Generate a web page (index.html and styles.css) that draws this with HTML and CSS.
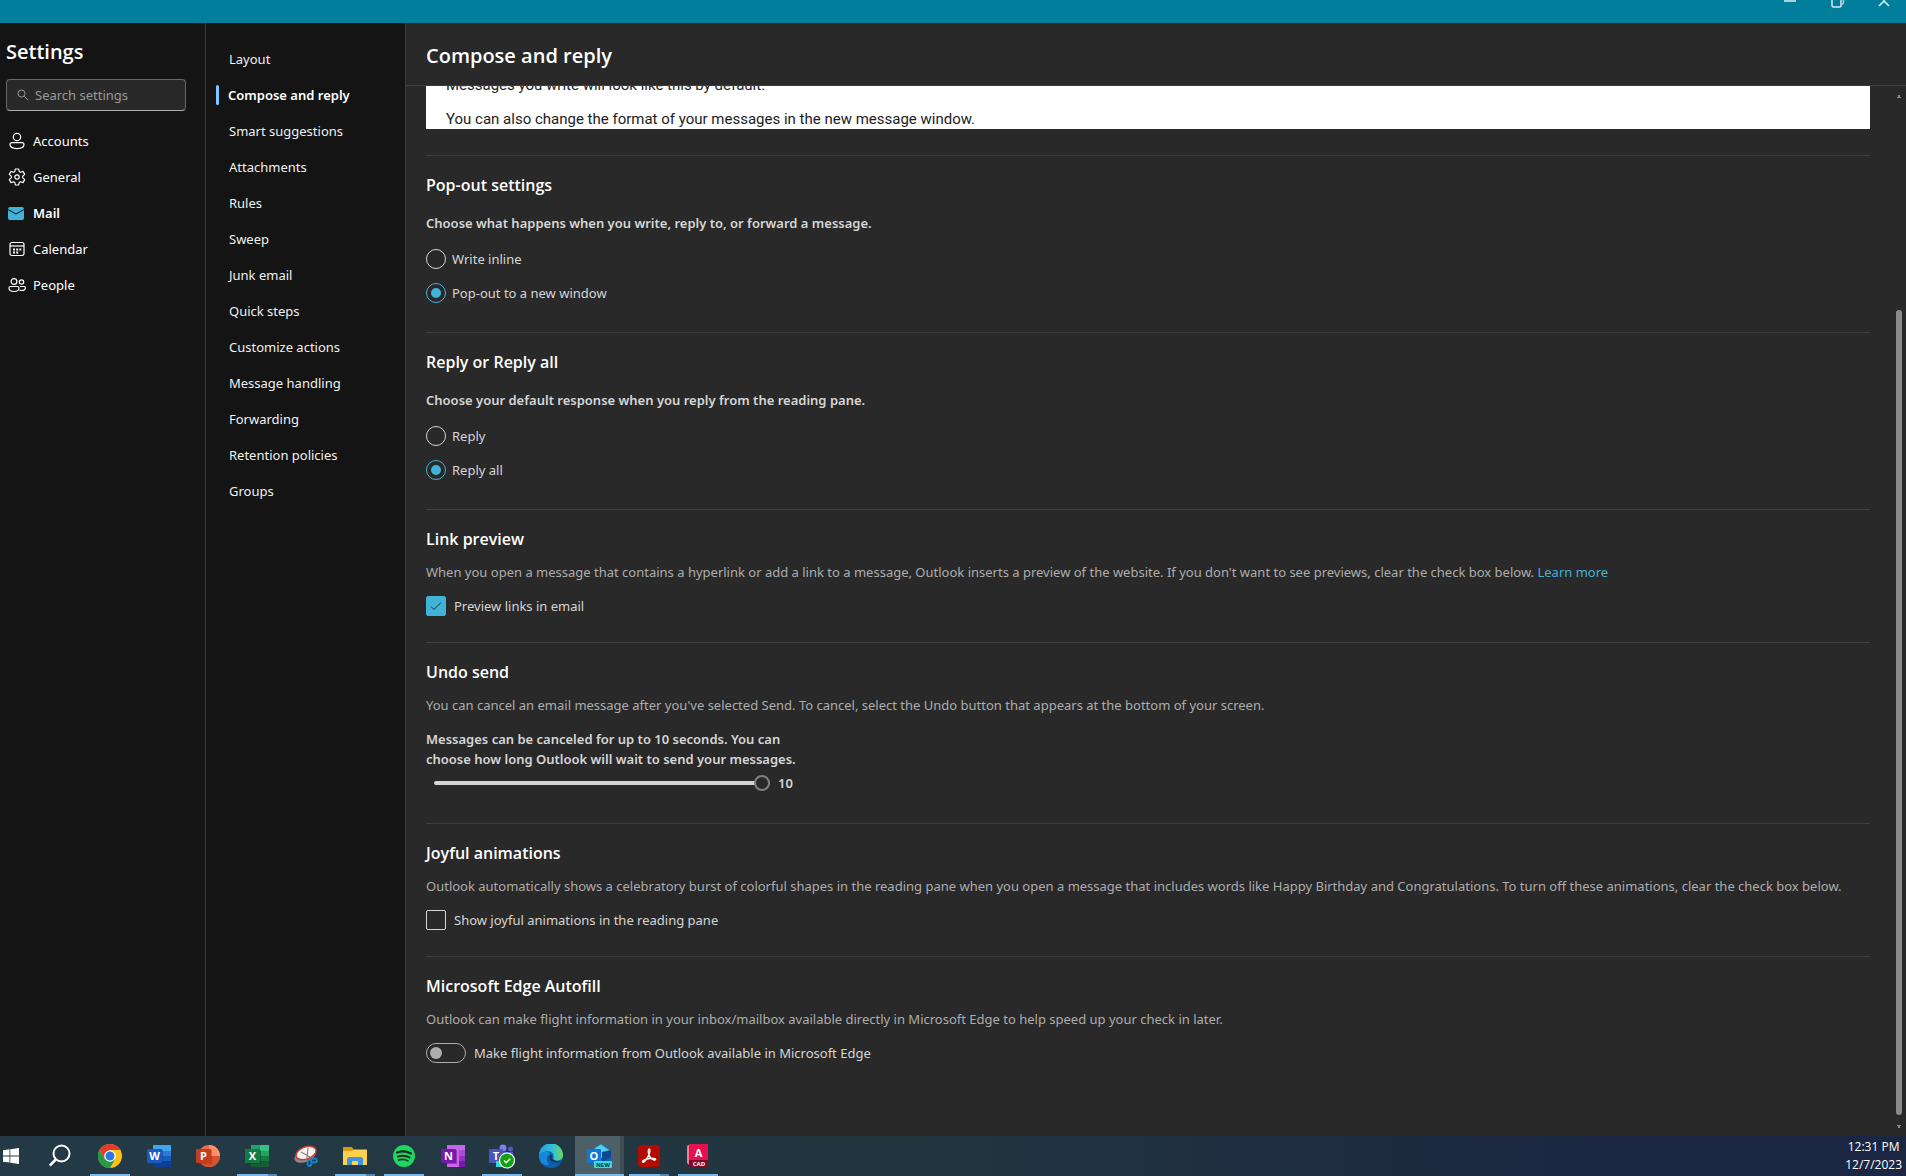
FILE: index.html
```html
<!DOCTYPE html>
<html lang="en">
<head>
<meta charset="utf-8">
<title>Settings - Outlook</title>
<link rel="stylesheet" href="styles.css">
</head>
<body>
<div class="window-bar">
  <button class="win-btn" aria-label="Minimize"><svg width="14" height="8" viewBox="0 0 14 8"><path d="M1 1h12" stroke="#a9d2dd" stroke-width="2"/></svg></button>
  <button class="win-btn" aria-label="Restore"><svg width="14" height="8" viewBox="0 0 14 8" fill="none"><path d="M1 0v5.500q0 1.500 1.500 1.500h6q1.500 0 1.500-1.500V0" stroke="#d4e9ef" stroke-width="1.500"/><path d="M12.500 0v2q0 2-1.500 2.500" stroke="#a9d2dd" stroke-width="1.500"/></svg></button>
  <button class="win-btn" aria-label="Close"><svg width="14" height="8" viewBox="0 0 14 8"><path d="M7 0v1M2 6l5-5 5 5" stroke="#e6f3f6" stroke-width="1.500" fill="none"/></svg></button>
</div>

<div class="settings">
  <aside class="sidebar">
    <h1 class="title">Settings</h1>
    <label class="search">
      <svg width="12" height="12" viewBox="0 0 12 12" fill="none" stroke="#999"><circle cx="4.500" cy="4.500" r="3.500"/><path d="M7.200 7.200l4 4"/></svg>
      <input type="text" placeholder="Search settings" aria-label="Search settings">
    </label>
    <nav class="categories">
      <a href="#accounts"><svg width="18" height="18" viewBox="0 0 18 18" fill="none" stroke="#fff" stroke-width="1.200"><circle cx="9" cy="5" r="3.700"/><path d="M4 10.600h10a2 2 0 0 1 2 2c0 2.500-3 4-7 4s-7-1.500-7-4a2 2 0 0 1 2-2z"/></svg>Accounts</a>
      <a href="#general"><svg width="18" height="18" viewBox="0 0 18 18" fill="none" stroke="#fff" stroke-width="1.200" stroke-linejoin="round"><circle cx="9" cy="9" r="2.200"/><path d="M7.300 1h3.400l.5 2.500 1.300.8 2.500-.9 1.700 3-2 1.700v1.800l2 1.700-1.700 3-2.500-.9-1.300.8-.5 2.500H7.300l-.5-2.500-1.300-.8-2.500.9-1.700-3 2-1.700V8.100l-2-1.700 1.700-3 2.500.9 1.300-.8z"/></svg>General</a>
      <a href="#mail" class="current"><svg width="18" height="18" viewBox="0 0 18 18"><rect y="3" width="16" height="13" rx="2" fill="#41b3d8"/><path d="M0 5.500l8 4.500 8-4.500" fill="none" stroke="#14313c" stroke-width="1.100"/></svg>Mail</a>
      <a href="#calendar"><svg width="18" height="18" viewBox="0 0 18 18" fill="none" stroke="#fff" stroke-width="1.200"><rect x="2" y="2.500" width="14" height="13" rx="2"/><path d="M2 6h14"/><path d="M5 9.500h2M8.200 9.500h2M11.300 9.500h2M5 12.500h2M8.200 12.500h2" stroke-width="1.800"/></svg>Calendar</a>
      <a href="#people"><svg width="18" height="18" viewBox="0 0 18 18" fill="none" stroke="#fff" stroke-width="1.200"><circle cx="6" cy="5.500" r="2.900"/><circle cx="13.500" cy="6" r="2.200"/><path d="M2.500 10.500h7q1.500 0 1.500 1.500 0 3.500-5 3.500T1 12q0-1.500 1.500-1.500zM12 10.500h4q1.300 0 1.300 1.200 0 2.800-3.500 2.800-1.500 0-2.300-.4"/></svg>People</a>
    </nav>
  </aside>

  <nav class="pages">
    <a href="#layout">Layout</a>
    <a href="#compose" class="current">Compose and reply</a>
    <a href="#smart">Smart suggestions</a>
    <a href="#attachments">Attachments</a>
    <a href="#rules">Rules</a>
    <a href="#sweep">Sweep</a>
    <a href="#junk">Junk email</a>
    <a href="#quick">Quick steps</a>
    <a href="#customize">Customize actions</a>
    <a href="#handling">Message handling</a>
    <a href="#forwarding">Forwarding</a>
    <a href="#retention">Retention policies</a>
    <a href="#groups">Groups</a>
  </nav>

  <main class="detail">
    <header class="detail-head"><h2>Compose and reply</h2></header>
    <div class="scroll-area">
      <div class="content">
        <div class="preview">
          <p>Messages you write will look like this by default.</p>
          <p>You can also change the format of your messages in the new message window.</p>
        </div>

        <section class="group choices">
          <h3>Pop-out settings</h3>
          <p class="question" id="popout">Choose what happens when you write, reply to, or forward a message.</p>
          <div class="options" role="radiogroup" aria-labelledby="popout">
            <label class="option"><input type="radio" name="popout">Write inline</label>
            <label class="option"><input type="radio" name="popout" checked>Pop-out to a new window</label>
          </div>
        </section>

        <section class="group choices">
          <h3>Reply or Reply all</h3>
          <p class="question" id="reply">Choose your default response when you reply from the reading pane.</p>
          <div class="options" role="radiogroup" aria-labelledby="reply">
            <label class="option"><input type="radio" name="reply">Reply</label>
            <label class="option"><input type="radio" name="reply" checked>Reply all</label>
          </div>
        </section>

        <section class="group">
          <h3>Link preview</h3>
          <p class="description">When you open a message that contains a hyperlink or add a link to a message, Outlook inserts a preview of the website. If you don't want to see previews, clear the check box below. <a href="#learn">Learn more</a></p>
          <label class="option tick"><span class="box"><input type="checkbox" checked><svg width="12" height="12" viewBox="0 0 12 12"><path d="M1 6.500l3 3L11 2.500" fill="none" stroke="#14313c"/></svg></span>Preview links in email</label>
        </section>

        <section class="group choices">
          <h3>Undo send</h3>
          <p class="description">You can cancel an email message after you've selected Send. To cancel, select the Undo button that appears at the bottom of your screen.</p>
          <label class="delay-label" for="delay">Messages can be canceled for up to 10 seconds. You can<br>choose how long Outlook will wait to send your messages.</label>
          <div class="delay"><input id="delay" type="range" min="0" max="10" value="10"><output for="delay">10</output></div>
        </section>

        <section class="group">
          <h3>Joyful animations</h3>
          <p class="description">Outlook automatically shows a celebratory burst of colorful shapes in the reading pane when you open a message that includes words like Happy Birthday and Congratulations. To turn off these animations, clear the check box below.</p>
          <label class="option tick"><span class="box"><input type="checkbox"></span>Show joyful animations in the reading pane</label>
        </section>

        <section class="group">
          <h3>Microsoft Edge Autofill</h3>
          <p class="description">Outlook can make flight information in your inbox/mailbox available directly in Microsoft Edge to help speed up your check in later.</p>
          <label class="option tick"><input type="checkbox" role="switch" class="switch">Make flight information from Outlook available in Microsoft Edge</label>
        </section>
      </div>
      <div class="scrollbar" aria-hidden="true">
        <svg width="4" height="4" viewBox="0 0 4 4"><path d="M0 3h4v1H0zM1 1h2v2H1z" fill="#8a8a8a"/></svg>
        <div class="thumb"></div>
        <svg width="4" height="4" viewBox="0 0 4 4"><path d="M0 0h4v1H0zM1 1h2v2H1z" fill="#8a8a8a"/></svg>
      </div>
    </div>
  </main>
</div>

<footer class="taskbar">
  <div class="apps">
    <button class="start" aria-label="Start"><svg width="16" height="16" viewBox="0 0 16 16" fill="#fff"><path d="M0 2.200l6.500-.9v6.200H0zM7.300 1.200L16 0v7.500H7.300zM0 8.400h6.500v6.200L0 13.700zM7.300 8.400H16V16l-8.700-1.200z"/></svg></button>
    <button aria-label="Search"><svg width="24" height="24" viewBox="0 0 24 24" fill="none" stroke="#fff" stroke-width="2"><circle cx="12.500" cy="9.500" r="8"/><path d="M6.800 15.500L.8 21.500" stroke-width="2.500"/></svg></button>
    <button class="open" aria-label="Chrome"><svg width="24" height="24" viewBox="0 0 24 24"><circle cx="12" cy="12" r="12" fill="#fbc116"/><path d="M1.600 6A12 12 0 0 1 22.400 6H12L6.800 15z" fill="#e33b2e"/><path d="M1.600 6A12 12 0 0 0 12 24l5.200-9L12 17.500 6.800 15z" fill="#279847"/><circle cx="12" cy="12" r="5.800" fill="#fff"/><circle cx="12" cy="12" r="4.500" fill="#2a77e4"/></svg></button>
    <button aria-label="Word"><svg width="24" height="24" viewBox="0 0 24 24"><path d="M6 1h18v6H6z" fill="#41a5ee"/><path d="M6 7h18v5H6z" fill="#2b7cd3"/><path d="M6 12h18v5H6z" fill="#185abd"/><path d="M6 17h18v6H6z" fill="#103f91"/><rect x="3" y="6" width="13" height="14" fill="#103f91" opacity=".5"/><rect y="5" width="15" height="14" rx="1" fill="#185abd"/><text x="7.500" y="16" class="glyph">W</text></svg></button>
    <button aria-label="PowerPoint"><svg width="24" height="24" viewBox="0 0 24 24"><circle cx="13" cy="12" r="11" fill="#ed6c47"/><path d="M13 1a11 11 0 0 1 11 11H13z" fill="#ff8f6b"/><path d="M2 12h22a11 11 0 0 1-22 0z" fill="#d35230"/><rect x="3" y="6" width="13" height="14" fill="#8b2a14" opacity=".4"/><rect y="5" width="15" height="14" rx="1" fill="#c43e1c"/><text x="7.500" y="16" class="glyph">P</text></svg></button>
    <button class="open stacked" aria-label="Excel"><svg width="24" height="24" viewBox="0 0 24 24"><path d="M6 1h18v22H6z" fill="#21a366"/><path d="M15 1h9v6h-9z" fill="#33c481"/><path d="M15 12h9v5h-9z" fill="#107c41"/><path d="M6 12h9v11H6z" fill="#185c37"/><path d="M6 17h18v6H6z" fill="#185c37"/><rect x="3" y="6" width="13" height="14" fill="#0c3b21" opacity=".5"/><rect y="5" width="15" height="14" rx="1" fill="#107c41"/><text x="7.500" y="16" class="glyph">X</text></svg></button>
    <button aria-label="Snipping Tool"><svg width="24" height="24" viewBox="0 0 24 24"><ellipse cx="11" cy="12" rx="11" ry="6" transform="rotate(-20 11 12)" fill="#8b8b8b"/><ellipse cx="12" cy="9" rx="10.500" ry="6" transform="rotate(-20 12 9)" fill="#f4f4f4" stroke="#d8382d" stroke-width="1.500"/><path d="M7 8l9 5M14 4l-1 10" stroke="#888" stroke-width="1.200"/><g fill="none" stroke="#1782cc" stroke-width="1.800"><ellipse cx="15.500" cy="19" rx="2" ry="3"/><ellipse cx="20" cy="16.500" rx="3" ry="2"/></g></svg></button>
    <button class="open stacked" aria-label="File Explorer"><svg width="24" height="24" viewBox="0 0 24 24"><path d="M0 5V4q0-1 1-1h8l2 3h12q1 0 1 1v4H0z" fill="#d99b0a"/><path d="M0 7h9l2-1.500h13V21H0z" fill="#ffcf4f"/><path d="M4 21v-6q0-2 2-2h12q2 0 2 2v6h-5v-4H9v4z" fill="#3f95dd"/></svg></button>
    <button class="open" aria-label="Spotify"><svg width="24" height="24" viewBox="0 0 24 24"><circle cx="12" cy="12" r="11" fill="#1ed760"/><g fill="none" stroke="#172b22" stroke-linecap="round"><path d="M5 8.500q7.500-2.500 14 1" stroke-width="2.300"/><path d="M6 12.500q6.500-2 11.500 1" stroke-width="1.900"/><path d="M6.500 16q5.500-1.500 9.500.9" stroke-width="1.600"/></g></svg></button>
    <button aria-label="OneNote"><svg width="24" height="24" viewBox="0 0 24 24"><path d="M6 1h18v22H6z" fill="#ca64ea"/><path d="M18 6h6v6h-6z" fill="#ae4bd5"/><path d="M18 12h6v5h-6z" fill="#9332bf"/><path d="M18 17h6v6h-6z" fill="#7719aa"/><rect x="3" y="6" width="13" height="14" fill="#50127a" opacity=".5"/><rect y="5" width="15" height="14" rx="1" fill="#7719aa"/><text x="7.500" y="16" class="glyph">N</text></svg></button>
    <button class="open" aria-label="Teams"><svg width="26" height="26" viewBox="0 0 26 26"><circle cx="14" cy="5" r="3.500" fill="#7b83eb"/><circle cx="21.500" cy="6" r="2.500" fill="#5059c9"/><path d="M8 9h16v6q0 6-7 7-7 0-9-6z" fill="#5059c9"/><rect y="6" width="14" height="14" rx="1" fill="#4b53bc"/><text x="7" y="17" class="glyph">T</text><rect x="7" y="18" width="8" height="6" fill="#38d7dc"/><circle cx="18" cy="17.500" r="7.500" fill="#13a10e" stroke="#fff" stroke-width="1.200"/><path d="M15 17.500l2.200 2.200 4-4" fill="none" stroke="#fff" stroke-width="1.500"/></svg></button>
    <button aria-label="Edge"><svg width="24" height="24" viewBox="0 0 24 24"><defs><linearGradient id="edge-wave" x1="0" x2="1"><stop stop-color="#1f9ee0"/><stop offset=".6" stop-color="#35c1d9"/><stop offset="1" stop-color="#66dc52"/></linearGradient></defs><circle cx="12" cy="12" r="12" fill="#0c5fae"/><path d="M0 11A12 12 0 0 1 24 11.500c0 4-4 5.500-7.500 4.800-3-.7-1.800-1.800-1.800-4C14.500 8 10 6.500 6 7.700 3 8.700 1 10 0 11z" fill="url(#edge-wave)"/><path d="M0 12c1-5 10-6 11-2-4 2-4 7-1 10-2 3-10 0-10-8z" fill="#1788d8"/><path d="M11 11c-1.500 3 1 7.500 6 7.500 2.500 0 5-.5 6-1-1-.5-3 0-6-.500-4-1-5-3-4-6z" fill="#20353f"/></svg></button>
    <button class="open active" aria-label="Outlook"><svg width="26" height="24" viewBox="0 0 26 24"><path d="M4 7L14 0l10 7v12H4z" fill="#28a8ea"/><path d="M8 4l6-3 10 7-10 6z" fill="#50d0f5"/><path d="M24 7v12H8z" fill="#0f5fb0"/><path d="M15 8l9-2v7l-9 5z" fill="#0a4a94"/><rect y="5" width="14" height="14" rx="1" fill="#0f78d4"/><text x="7" y="16" class="glyph">O</text><rect x="7" y="17" width="18" height="7" rx="1" fill="#38dde0"/><text x="16" y="23" class="tag dark">NEW</text></svg></button>
    <button class="open stacked" aria-label="Acrobat"><svg width="22" height="22" viewBox="0 0 22 22"><rect width="22" height="22" rx="4" fill="#b30b00"/><path d="M4.500 17c-.5-1.500 4-3.500 9-3.800 3 0 4.500.5 4 1.500-1 1.500-6-1.500-7-6-.5-3 0-5 .9-4.500 1.500.8-.4 7-3.900 11.300-1.300 1.500-2.500 2.300-3 1.500z" fill="none" stroke="#fff" stroke-width="1.400"/></svg></button>
    <button class="open" aria-label="AutoCAD"><svg width="22" height="24" viewBox="0 0 22 24"><path d="M0 2l3-2v22l-3-3z" fill="#f77c92"/><path d="M2 0h18q1 0 1 1v16H2z" fill="#e51050"/><path d="M2 16h19v7q0 1-1 1H4l-2-2z" fill="#7a0a2c"/><text x="11.500" y="13" class="glyph">A</text><text x="12" y="22" class="tag">CAD</text></svg></button>
  </div>
  <div class="clock"><time>12:31 PM</time><time>12/7/2023</time></div>
</footer>
</body>
</html>
```
FILE: styles.css
```css
* { box-sizing: border-box; }

body {
  margin: 0;
  min-height: 100vh;
  display: flex;
  flex-direction: column;
  background: #292929;
  color: #d6d6d6;
  font: 13px/20px "Noto Sans", "Open Sans", sans-serif;
}

h1, h2, h3, p { margin: 0; }
a { color: inherit; text-decoration: none; }
button { border: 0; padding: 0; background: none; }

/* Window title bar */
.window-bar {
  height: 23px;
  display: flex;
  justify-content: flex-end;
  background: #007e9b;
}
.win-btn { width: 48px; display: flex; justify-content: center; align-items: flex-start; }
.window-bar .win-btn:last-child { width: 44px; }

.settings {
  flex: 1;
  display: grid;
  grid-template-columns: 206px 200px 1fr;
}

/* Category sidebar */
.sidebar { background: #141414; border-right: 1px solid #3d3d3d; padding: 15px 19px 0 6px; }
.title, .detail-head h2 {
  color: #fff;
  font: 600 20px/28px "Open Sans", sans-serif;
}
.search {
  height: 32px;
  margin: 13px 0 12px;
  padding: 0 10px;
  display: flex;
  align-items: center;
  gap: 6px;
  background: #292929;
  border: 1px solid #666;
  border-bottom-color: #adadad;
  border-radius: 4px;
}
.search input {
  flex: 1;
  min-width: 0;
  padding: 0;
  border: 0;
  outline: 0;
  background: none;
  color: #fff;
  font: inherit;
}
.search input::placeholder { color: #999; opacity: 1; }
.categories a {
  height: 36px;
  display: flex;
  align-items: center;
  gap: 7px;
  padding-left: 2px;
  color: #fff;
}
.categories .current { font-weight: 600; }

/* Page list */
.pages { background: #141414; border-right: 1px solid #3d3d3d; padding-top: 18px; }
.pages a {
  height: 36px;
  display: flex;
  align-items: center;
  padding-left: 23px;
  color: #f0f0f0;
}
.pages .current { padding-left: 10px; font-weight: 600; color: #fff; }
.pages .current::before {
  content: "";
  width: 3px;
  height: 20px;
  margin-right: 9px;
  border-radius: 2px;
  background: #82c7ff;
}

/* Detail pane */
.detail { display: flex; flex-direction: column; min-width: 0; }
.detail-head { height: 63px; padding: 19px 20px 0; border-bottom: 1px solid #3d3d3d; }
.scroll-area { flex: 1; display: flex; }
.content { flex: 1; min-width: 0; padding: 0 26px 40px 20px; }

.preview {
  height: 43px;
  margin-bottom: 26px;
  padding: 0 20px;
  display: flex;
  flex-direction: column;
  justify-content: flex-end;
  gap: 14px;
  overflow: hidden;
  background: #fff;
  color: #1c1c1c;
  font: 15px/20px Roboto, sans-serif;
}
.preview p { flex: none; }

.group { padding: 17px 0 26px; border-top: 1px solid #3d3d3d; }
.group.choices { padding-bottom: 29px; }
.group h3 { color: #fff; font: 600 16px/24px "Open Sans", sans-serif; }
.question { margin: 16px 0 16px; font-weight: 600; }
.description { margin: 11px 0 14px; color: #adadad; }
.description a { color: #41b3d8; }
.options { display: grid; gap: 14px; }
.option { display: flex; align-items: center; gap: 6px; height: 20px; }
.option.tick { gap: 8px; }

.option input { appearance: none; margin: 0; width: 20px; height: 20px; border: 1px solid #d6d6d6; }
.option input[type="radio"] { border-radius: 50%; display: grid; place-items: center; }
.option input[type="radio"]:checked { border-color: #41b3d8; }
.option input[type="radio"]:checked::before {
  content: "";
  width: 10px;
  height: 10px;
  border-radius: 50%;
  background: #41b3d8;
}
.box { display: grid; place-items: center; width: 20px; height: 20px; }
.box > * { grid-area: 1 / 1; }
.box input { border-radius: 2px; }
.box input:checked { background: #41b3d8; border-color: #41b3d8; }
.box svg { z-index: 1; }
.option .switch {
  width: 40px;
  padding: 0 3px;
  display: flex;
  align-items: center;
  border-color: #adadad;
  border-radius: 10px;
}
.switch::before { content: ""; width: 12px; height: 12px; border-radius: 50%; background: #adadad; }

.delay-label { display: block; font-weight: 600; }
.delay { height: 22px; margin: 3px 0 0 8px; display: flex; align-items: center; gap: 8px; font-weight: 600; }
.delay input { appearance: none; width: 336px; height: 16px; margin: 0; background: none; }
.delay input::-webkit-slider-runnable-track { height: 4px; border-radius: 2px; background: #d6d6d6; }
.delay input::-webkit-slider-thumb {
  appearance: none;
  width: 16px;
  height: 16px;
  margin-top: -6px;
  border: 2px solid #808080;
  border-radius: 50%;
  background: #292929;
}

.scrollbar { width: 10px; padding: 8px 4px 7px 0; display: flex; flex-direction: column; align-items: center; }
.thumb { flex: 1; width: 6px; margin: 212px 0 10px; border-radius: 3px; background: #8a8a8a; }

/* Taskbar */
.taskbar {
  height: 40px;
  display: flex;
  justify-content: space-between;
  background: linear-gradient(90deg, #233a46, #22353f 48%, #1b2742 85%);
}
.apps { display: flex; }
.apps button { width: 49px; display: grid; place-items: center; position: relative; }
.apps .start { width: 36px; padding-right: 14px; }
.apps .open::after {
  content: "";
  position: absolute;
  left: 5px;
  right: 4px;
  bottom: 0;
  height: 2px;
  background: #76b9ed;
}
.apps .stacked::after { background: linear-gradient(90deg, #76b9ed 31px, #5487b3 31px); }
.apps .active { background: linear-gradient(90deg, #4d6068 45px, #3f4e54 45px); }
.apps .active::after { left: 0; right: 0; }
.glyph { fill: #fff; font: bold 11px "Open Sans", sans-serif; text-anchor: middle; }
.tag { fill: #fff; font: bold 6px "Open Sans", sans-serif; text-anchor: middle; }
.tag.dark { fill: #10303a; }
.clock {
  padding: 2px 4px 0 0;
  display: flex;
  flex-direction: column;
  align-items: center;
  color: #fff;
  font: 12px/18px "Open Sans", sans-serif;
}
```
